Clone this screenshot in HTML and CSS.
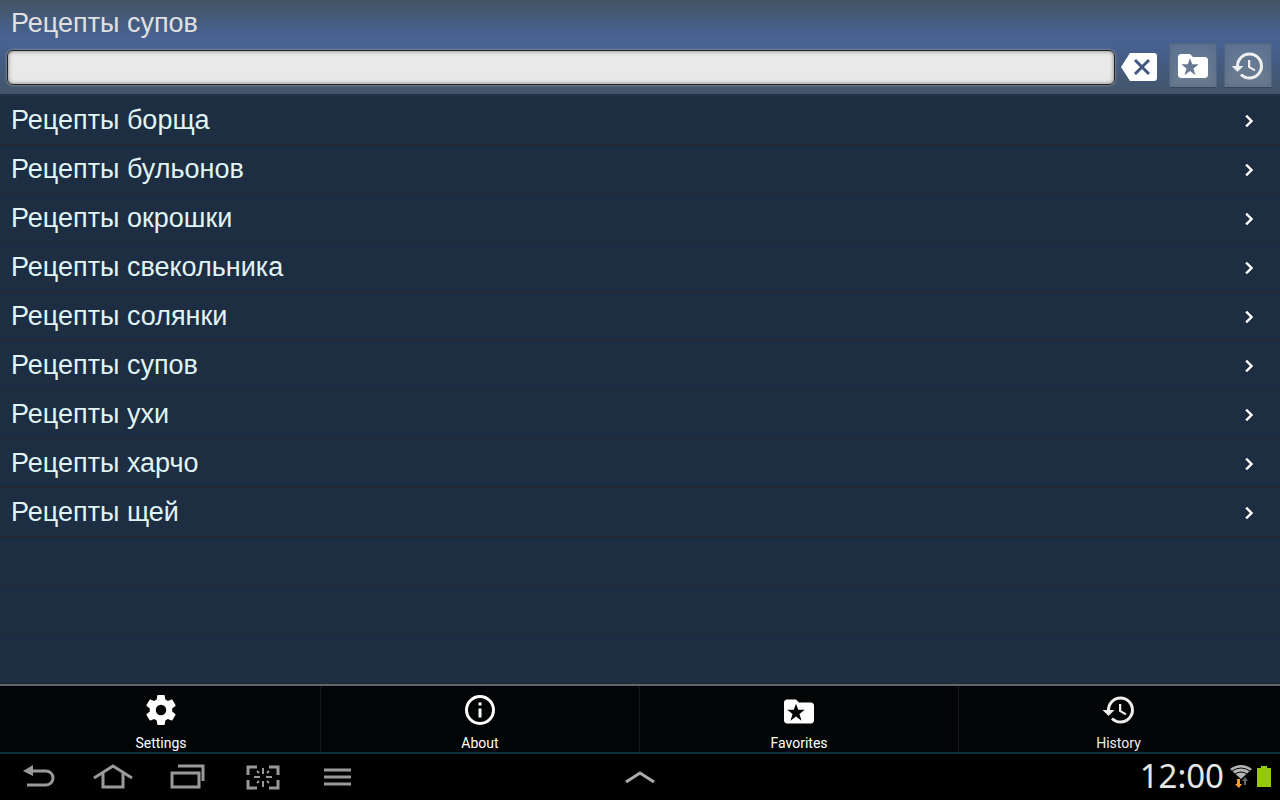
FILE: index.html
```html
<!DOCTYPE html>
<html lang="ru">
<head>
    <meta charset="UTF-8">
    <meta name="viewport" content="width=device-width, initial-scale=1.0">
    <title>Рецепты супов</title>
    <link rel="stylesheet" href="styles.css">
</head>
<body>
    <!-- shared icons -->
    <svg class="sprite" aria-hidden="true">
        <symbol id="icon-favorites" viewBox="0 0 24 24">
            <path fill-rule="evenodd" d="M20 6h-8l-2-2H4c-1.100 0-2 .9-2 2v12c0 1.100.9 2 2 2h16c1.100 0 2-.9 2-2V8c0-1.100-.9-2-2-2zM10 6.800l1.500 4.100h4.300l-3.500 2.700 1.400 4.600-3.700-2.800-3.700 2.800 1.400-4.600-3.500-2.700h4.300z"/>
        </symbol>
        <symbol id="icon-history" viewBox="0 0 24 24">
            <path d="M13 3a9 9 0 0 0-9 9H1l3.890 3.890.07.14L9 12H6c0-3.870 3.130-7 7-7s7 3.130 7 7-3.130 7-7 7c-1.930 0-3.680-.79-4.940-2.060l-1.420 1.420A8.954 8.954 0 0 0 13 21a9 9 0 0 0 0-18zm-1 5v5l4.280 2.540.72-1.210-3.500-2.080V8H12z"/>
        </symbol>
        <symbol id="icon-next" viewBox="0 0 24 24">
            <path stroke="currentColor" stroke-width=".5" d="M10 6L8.590 7.410 13.170 12l-4.580 4.590L10 18l6-6z"/>
        </symbol>
    </svg>

    <header class="header">
        <h1>Рецепты супов</h1>
        <form class="search">
            <input type="text" class="search-input" aria-label="Поиск">
            <button type="reset" class="clear-button" aria-label="Очистить">
                <svg viewBox="0 0 36 28" width="36" height="28">
                    <path fill="#fff" d="M9 0h24q3 0 3 3v22q0 3-3 3H9L0 14z"/>
                    <path fill="none" stroke="#43597f" stroke-width="3" d="M14 7l14 14M28 7L14 21"/>
                </svg>
            </button>
            <button type="button" class="tool-button" aria-label="Избранное">
                <svg><use href="#icon-favorites"/></svg>
            </button>
            <button type="button" class="tool-button" aria-label="История">
                <svg><use href="#icon-history"/></svg>
            </button>
        </form>
    </header>

    <main class="content">
        <ul class="list">
            <li><a href="#">Рецепты борща <svg><use href="#icon-next"/></svg></a></li>
            <li><a href="#">Рецепты бульонов <svg><use href="#icon-next"/></svg></a></li>
            <li><a href="#">Рецепты окрошки <svg><use href="#icon-next"/></svg></a></li>
            <li><a href="#">Рецепты свекольника <svg><use href="#icon-next"/></svg></a></li>
            <li><a href="#">Рецепты солянки <svg><use href="#icon-next"/></svg></a></li>
            <li><a href="#">Рецепты супов <svg><use href="#icon-next"/></svg></a></li>
            <li><a href="#">Рецепты ухи <svg><use href="#icon-next"/></svg></a></li>
            <li><a href="#">Рецепты харчо <svg><use href="#icon-next"/></svg></a></li>
            <li><a href="#">Рецепты щей <svg><use href="#icon-next"/></svg></a></li>
        </ul>
    </main>

    <nav class="menu">
        <button type="button">
            <svg viewBox="0 0 24 24"><path d="M19.430 12.980c.04-.32.07-.64.07-.98s-.03-.66-.07-.98l2.110-1.650c.19-.15.24-.42.12-.64l-2-3.460c-.12-.22-.39-.3-.61-.22l-2.490 1c-.52-.4-1.080-.73-1.690-.98l-.38-2.650A.488.488 0 0 0 14 2h-4c-.25 0-.46.18-.49.42l-.38 2.650c-.61.25-1.170.59-1.690.98l-2.490-1c-.23-.09-.49 0-.61.22l-2 3.460c-.13.22-.07.49.12.64l2.110 1.650c-.04.32-.07.65-.07.98s.03.66.07.98l-2.110 1.650c-.19.15-.24.42-.12.64l2 3.460c.12.22.39.3.61.22l2.490-1c.52.4 1.080.73 1.690.98l.38 2.650c.03.24.24.42.49.42h4c.25 0 .46-.18.49-.42l.38-2.650c.61-.25 1.170-.59 1.690-.98l2.490 1c.23.09.49 0 .61-.22l2-3.460c.12-.22.07-.49-.12-.64l-2.110-1.650zM12 15.500a3.500 3.500 0 1 1 0-7 3.500 3.500 0 0 1 0 7z"/></svg>
            Settings
        </button>
        <button type="button">
            <svg viewBox="0 0 24 24"><path d="M11 17h2v-6h-2v6zm1-15a10 10 0 1 0 0 20 10 10 0 0 0 0-20zm0 18a8 8 0 1 1 0-16 8 8 0 0 1 0 16zM11 9h2V7h-2v2z"/></svg>
            About
        </button>
        <button type="button">
            <svg viewBox="0 -1 24 24"><use href="#icon-favorites" width="24" height="24"/></svg>
            Favorites
        </button>
        <button type="button" class="dim">
            <svg><use href="#icon-history"/></svg>
            History
        </button>
    </nav>

    <footer class="system-bar">
        <div class="system-keys">
            <button type="button" aria-label="Back">
                <svg viewBox="0 0 40 32"><path class="line" d="M13 10h15a7 7 0 0 1 0 14H9"/><path d="M5 10l10-6v11z"/></svg>
            </button>
            <button type="button" aria-label="Home">
                <svg viewBox="0 0 40 32"><path class="line" d="M1 17L20 5l19 12M10 12v14h20V12"/></svg>
            </button>
            <button type="button" aria-label="Recent apps">
                <svg viewBox="0 0 40 32"><path class="line" d="M4 12h27v14H4zM10 5h25v15"/></svg>
            </button>
            <button type="button" aria-label="Screenshot">
                <svg viewBox="0 0 40 32"><path class="line" d="M5 14V6h9M26 6h9v8M35 19v8h-9M14 27H5v-8"/><path class="thin" d="M20 7v6M20 20v6M11 16h6M23 16h6M14 10l2 2M26 10l-2 2M14 22l2-2M26 22l-2-2"/></svg>
            </button>
            <button type="button" aria-label="Menu">
                <svg viewBox="0 0 40 32"><path class="line" d="M6 9h27M6 16h27M6 23h27"/></svg>
            </button>
        </div>
        <button type="button" class="expand" aria-label="Expand">
            <svg viewBox="0 0 40 32"><path class="line" d="M6 21l14-9 14 9"/></svg>
        </button>
        <div class="status">
            <span class="clock">12:00</span>
            <svg class="wifi" viewBox="0 0 22 24">
                <path fill="#b4b4b4" d="M0 5q11-8 22 0L11 15z"/>
                <path fill="none" stroke="#000" d="M2 7q9-6 18 0M5 10q6-4 12 0"/>
                <path fill="#ff9a24" d="M7 15h3v5h2l-3 4-4-4h2z"/>
                <path fill="#666" d="M14 21v-4h-2l3-4 3 4h-2v4z"/>
            </svg>
            <svg class="battery" viewBox="0 0 14 21"><path fill="#95c80a" d="M0 2h4V0h6v2h4v19H0z"/></svg>
        </div>
    </footer>
</body>
</html>
```

FILE: styles.css
```css
/* styles.css */
* {
    box-sizing: border-box;
}

body {
    display: flex;
    flex-direction: column;
    height: 100vh;
    margin: 0;
    background-color: #000;
    font-family: "Liberation Sans", Arial, sans-serif;
}

button {
    padding: 0;
    border: none;
    background: none;
    cursor: pointer;
}

svg {
    display: block;
    fill: currentColor;
}

.sprite {
    position: absolute;
    width: 0;
    height: 0;
}

/* header */
.header {
    padding: 0 8px 6px 7px;
    background: linear-gradient(#425464, #486292 40%, #466090 50%, #425568);
    border-bottom: 2px solid #23344a;
}

h1 {
    height: 43px;
    margin: 0;
    padding: 2px 0 0 4px;
    color: #e0e0e0;
    font-size: 27px;
    font-weight: normal;
    line-height: 42px;
}

.search {
    display: flex;
    align-items: center;
}

.search-input {
    flex: 1;
    min-width: 0;
    height: 35px;
    margin: 4px 6px 0 0;
    padding: 0 8px;
    border: 1px solid #222;
    border-radius: 6px;
    background-color: #e9e9e9;
    box-shadow: 0 0 3px #aaa, inset 0 0 4px #777;
    font-size: 22px;
    outline: none;
}

.clear-button {
    margin: 2px 12px 0 0;
}

.tool-button {
    display: flex;
    align-items: center;
    justify-content: center;
    width: 48px;
    height: 45px;
    border: 1px solid #50647f;
    border-bottom-color: #34475b;
    background: linear-gradient(#5f7594, #6c7d8e);
    box-shadow: inset 0 0 8px #566b86;
    color: #fff;
}

.tool-button + .tool-button {
    margin-left: 7px;
    color: #eee;
}

.tool-button svg {
    width: 36px;
    height: 36px;
    flex: none;
}

/* recipe list, the ruled lines go on below the last row */
.content {
    flex: 1;
    min-height: 0;
    overflow: hidden;
    background: linear-gradient(#1d2d42 48px, #242829 48px) 0 0 / 100% 49px;
}

.list {
    margin: 0;
    padding: 0;
    list-style: none;
}

.list a {
    display: flex;
    align-items: center;
    justify-content: space-between;
    height: 49px;
    padding: 0 19px 0 11px;
    color: #e0f4f4;
    font-size: 27px;
    text-decoration: none;
}

.list svg {
    width: 24px;
    height: 24px;
    color: #fff;
}

/* options menu */
.menu {
    display: grid;
    grid-template-columns: repeat(4, 1fr);
    padding: 0 2px;
    border-top: 2px solid #62666c;
    border-bottom: 2px solid #0a303c;
    background-color: #030405;
}

.menu button {
    display: flex;
    flex-direction: column;
    align-items: center;
    height: 66px;
    padding-top: 6px;
    border-right: 1px solid #17191a;
    color: #fff;
    font-family: Roboto, sans-serif;
    font-size: 14px;
    line-height: 16px;
    gap: 7px;
}

.menu button:last-child {
    border-right: none;
}

.menu svg {
    width: 36px;
    height: 36px;
}

.menu .dim {
    color: #eee;
}

/* system bar */
.system-bar {
    display: grid;
    grid-template-columns: 1fr auto 1fr;
    align-items: center;
    height: 46px;
    color: #999;
}

.system-keys {
    display: flex;
}

.system-keys button {
    display: flex;
    justify-content: center;
    width: 75px;
    color: inherit;
}

.system-bar button svg {
    width: 40px;
    height: 32px;
}

.expand {
    color: #aaa;
}

.line {
    fill: none;
    stroke: currentColor;
    stroke-width: 3;
}

.thin {
    fill: none;
    stroke: currentColor;
    stroke-width: 2;
}

.status {
    display: flex;
    align-items: center;
    justify-content: flex-end;
    padding: 0 9px 2px 0;
}

.clock {
    color: #e6e6e6;
    font-family: "Noto Sans", sans-serif;
    font-size: 33px;
    line-height: 44px;
}

.wifi {
    width: 22px;
    height: 24px;
    margin: 0 5px 0 6px;
}

.battery {
    width: 14px;
    height: 21px;
}
```
